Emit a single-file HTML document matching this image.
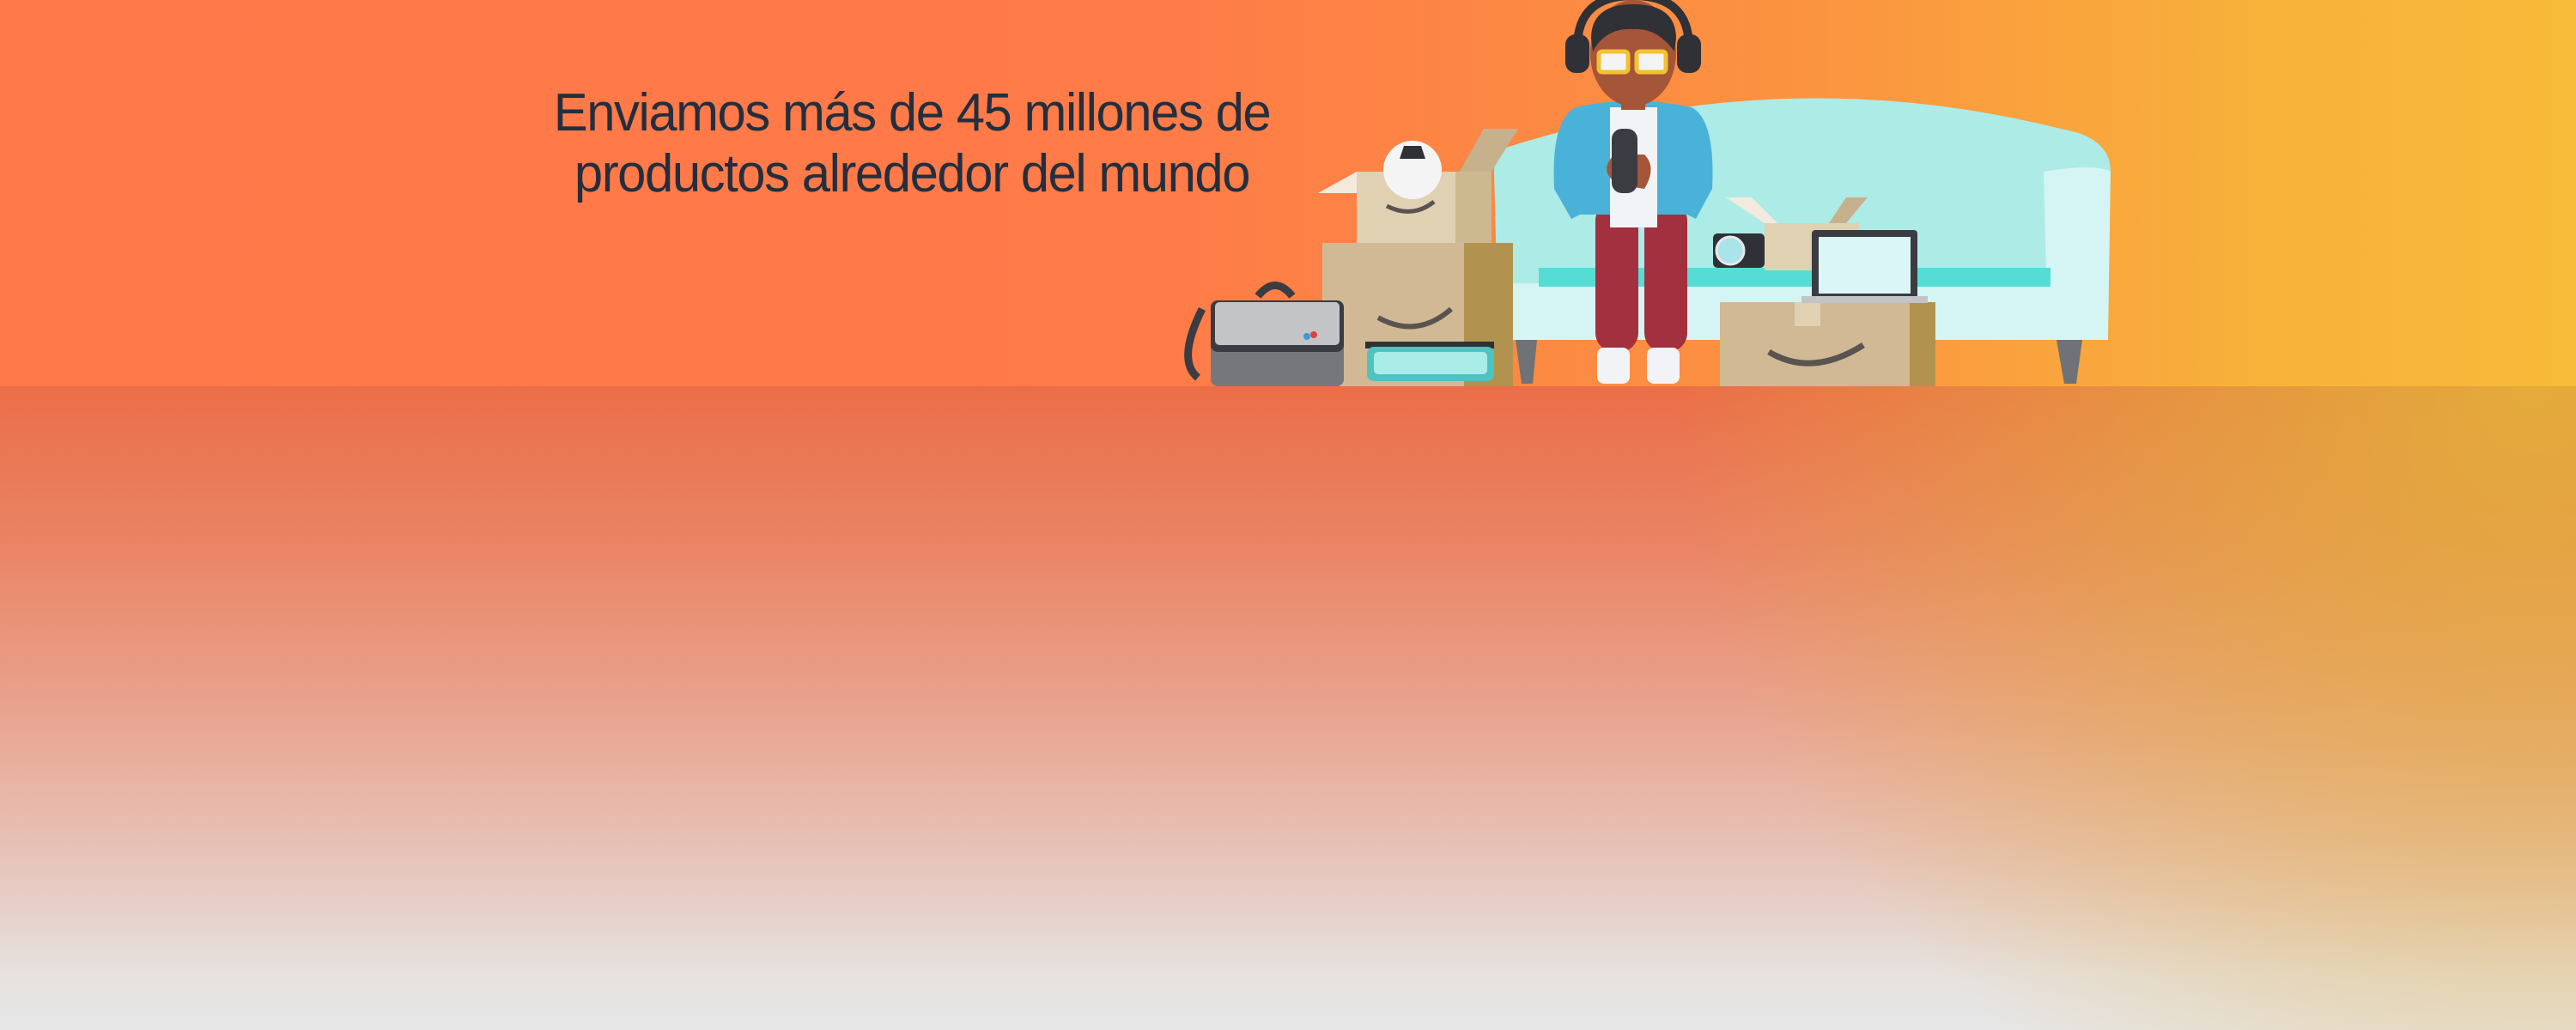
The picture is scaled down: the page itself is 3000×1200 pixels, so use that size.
<!DOCTYPE html>
<html><head><meta charset="utf-8">
<style>
html,body{margin:0;padding:0;}
body{width:3000px;height:1200px;position:relative;overflow:hidden;font-family:"Liberation Sans",sans-serif;}
#top{position:absolute;left:0;top:0;width:3000px;height:450px;background:linear-gradient(90deg,#FF7849 0%,#FF7B48 45%,#FB9340 70%,#F8B23A 88%,#F8BA39 100%);}
#bot{position:absolute;left:0;top:450px;width:3000px;height:750px;background:linear-gradient(180deg,#EB6E48 0%,#EA8465 25%,#E9A38E 50%,#E7C2B6 72%,#E6E2E0 92%,#E6E6E6 100%);}
#bot2{position:absolute;left:0;top:450px;width:3000px;height:750px;background:radial-gradient(ellipse 1000px 950px at 2950px 0px,rgba(227,174,58,0.95) 0%,rgba(227,174,58,0.6) 40%,rgba(227,174,58,0) 100%);}
#txt{position:absolute;left:462px;width:1200px;top:96px;text-align:center;color:#232F3E;font-size:62px;line-height:71px;letter-spacing:-1.5px;transform:scaleX(0.965);transform-origin:center top;}
svg{position:absolute;left:0;top:0;}
</style></head><body>
<div id="top"></div>
<div id="bot"></div>
<div id="bot2"></div>
<div id="txt">Enviamos más de 45 millones de<br>productos alrededor del mundo</div>
<svg width="3000" height="1200" viewBox="0 0 3000 1200">
<path d="M1760 170 Q2080 70 2400 150 Q2458 160 2458 200 L2450 396 L1745 396 L1740 200 Q1740 175 1760 170Z" fill="#ADEBE7"/>
<path d="M2380 200 Q2440 190 2458 200 L2455 396 L2385 396Z" fill="#D4F5F3"/>
<rect x="1760" y="330" width="690" height="66" fill="#D4F5F3"/>
<rect x="1792" y="312" width="596" height="22" fill="#55DDD5"/>
<path d="M1765 396 L1790 396 L1785 447 L1772 447Z" fill="#6F7276"/>
<path d="M2395 396 L2425 396 L2418 447 L2404 447Z" fill="#6F7276"/>
<rect x="1858" y="235" width="50" height="175" rx="22" fill="#A2303F"/>
<rect x="1915" y="235" width="50" height="175" rx="22" fill="#A2303F"/>
<rect x="1860" y="405" width="38" height="42" rx="8" fill="#F2F3F7"/>
<rect x="1918" y="405" width="38" height="42" rx="8" fill="#F2F3F7"/>
<path d="M1835 125 Q1900 110 1970 125 Q1998 140 1994 220 L1975 255 L1965 250 L1840 250 L1830 255 L1810 220 Q1806 140 1835 125Z" fill="#4AB2D8"/>
<rect x="1875" y="125" width="55" height="140" fill="#F2F3F7"/>
<path d="M1880 180 Q1860 200 1885 215 L1915 220 Q1930 195 1915 180Z" fill="#A55538"/>
<rect x="1877" y="150" width="30" height="75" rx="12" fill="#3A3C42"/>
<rect x="1888" y="100" width="28" height="28" fill="#A55538"/>
<ellipse cx="1902" cy="62" rx="50" ry="62" fill="#A55538"/>
<path d="M1853 45 Q1853 5 1902 5 Q1952 5 1952 45 L1950 60 Q1930 32 1902 34 Q1870 32 1855 60Z" fill="#2F3136"/>
<path d="M1837 55 Q1837 -5 1902 -5 Q1967 -5 1967 55" fill="none" stroke="#2F3136" stroke-width="10"/>
<rect x="1823" y="40" width="28" height="45" rx="12" fill="#2F3136"/>
<rect x="1953" y="40" width="28" height="45" rx="12" fill="#2F3136"/>
<rect x="1862" y="60" width="34" height="24" rx="4" fill="#F4F4F4" stroke="#F2C230" stroke-width="5"/>
<rect x="1906" y="60" width="34" height="24" rx="4" fill="#F4F4F4" stroke="#F2C230" stroke-width="5"/>
<rect x="1540" y="283" width="222" height="167" fill="#D0B994"/>
<rect x="1705" y="283" width="57" height="167" fill="#B1934F"/>
<path d="M1605 370 Q1650 395 1690 360" fill="none" stroke="#5A5450" stroke-width="6"/>
<rect x="1580" y="200" width="157" height="83" fill="#E0D1B3"/>
<rect x="1695" y="200" width="42" height="83" fill="#CDB98F"/>
<path d="M1535 225 L1580 200 L1580 225Z" fill="#F2EBDD"/>
<path d="M1700 200 L1728 150 L1768 150 L1737 200Z" fill="#C7B18C"/>
<circle cx="1645" cy="198" r="34" fill="#F4F4F4"/>
<path d="M1635 170 L1655 170 L1660 185 L1630 185Z" fill="#2F3136"/>
<path d="M1615 240 Q1645 255 1670 235" fill="none" stroke="#5A5450" stroke-width="5"/>
<path d="M1395 440 Q1370 420 1400 360" fill="none" stroke="#3A3C42" stroke-width="9"/>
<path d="M1465 345 Q1485 320 1505 345" fill="none" stroke="#3A3C42" stroke-width="9"/>
<rect x="1410" y="350" width="155" height="100" rx="8" fill="#76777B"/>
<rect x="1410" y="350" width="155" height="60" rx="8" fill="#3A3C42"/>
<rect x="1415" y="352" width="145" height="50" rx="5" fill="#C3C4C6"/>
<circle cx="1530" cy="390" r="4" fill="#E04040"/><circle cx="1522" cy="392" r="4" fill="#3A9AD9"/>
<rect x="1590" y="398" width="150" height="8" fill="#2F3136"/>
<rect x="1592" y="404" width="148" height="40" rx="8" fill="#4EC4C0"/>
<rect x="1600" y="410" width="132" height="26" rx="5" fill="#A9ECE8"/>
<rect x="2003" y="352" width="251" height="98" fill="#D0B994"/>
<rect x="2224" y="352" width="30" height="98" fill="#B1934F"/>
<path d="M2060 410 Q2110 440 2170 402" fill="none" stroke="#5A5450" stroke-width="7"/>
<rect x="2090" y="352" width="30" height="28" fill="#E0D1B3"/>
<rect x="2055" y="260" width="110" height="55" fill="#E0D1B3"/>
<path d="M2010 230 L2055 260 L2070 260 L2040 230Z" fill="#F2EBDD"/>
<path d="M2130 260 L2150 230 L2175 230 L2150 260Z" fill="#C7B18C"/>
<rect x="1995" y="272" width="60" height="40" rx="5" fill="#2F3136"/>
<circle cx="2015" cy="292" r="16" fill="#A9E4EA" stroke="#E8E8E8" stroke-width="3"/>
<rect x="2110" y="268" width="123" height="80" rx="4" fill="#3A3C42"/>
<rect x="2118" y="276" width="107" height="66" fill="#DAF6F6"/>
<rect x="2098" y="345" width="147" height="8" fill="#C3C4C6"/>
</svg>
</body></html>
